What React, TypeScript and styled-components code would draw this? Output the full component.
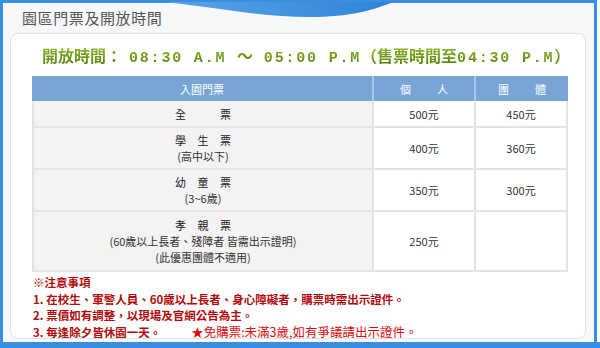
import React from "react";
import styled, { createGlobalStyle } from "styled-components";

const GlobalStyle = createGlobalStyle`
  html, body {
    margin: 0;
    padding: 0;
    background: #ffffff;
  }
  body {
    font-family: "Noto Sans CJK TC", "Liberation Sans", sans-serif;
  }
`;

const Outer = styled.div`
  position: relative;
  width: 600px;
  height: 348px;
  box-sizing: border-box;
  border-bottom: 6px solid #3a8ee0;
  overflow: hidden;
`;

const Frame = styled.div`
  width: 597px;
  height: 100%;
  box-sizing: border-box;
  border-left: 3px solid #3a8ee0;
  border-top: 3px solid #3a8ee0;
  border-right: 3px solid #3a8ee0;
  background: #f7f8f9;
  display: flex;
  flex-direction: column;
  padding: 0 8px 3px 7px;
`;

const Swoosh = styled.svg`
  position: absolute;
  left: 0;
  top: 0;
`;

const Title = styled.h2`
  flex-shrink: 0;
  margin: 0;
  height: 30px;
  display: flex;
  align-items: center;
  padding-left: 12px;
  font-size: 15px;
  line-height: 20px;
  font-weight: 400;
  letter-spacing: 0.6px;
  color: #555;
`;

const Panel = styled.div`
  flex: 1;
  min-height: 0;
  background: #fff;
  border: 1px solid #e2e2e2;
  border-radius: 8px;
  padding: 11px 16px 0 21px;
  display: flex;
  flex-direction: column;
`;

const Hours = styled.div`
  flex-shrink: 0;
  height: 20px;
  line-height: 20px;
  padding-left: 10px;
  margin-bottom: 11px;
  font-size: 16px;
  font-weight: 700;
  white-space: nowrap;
  background: linear-gradient(#94c232, #557f0a);
  -webkit-background-clip: text;
  background-clip: text;
  color: transparent;
`;

const Mono = styled.span<{ $lead?: boolean }>`
  font-family: "Liberation Mono", monospace;
  font-size: 15px;
  letter-spacing: 1.8px;
  margin-left: ${(p) => (p.$lead ? "7px" : "0")};
`;

const Head = styled.div`
  display: grid;
  grid-template-columns: 340px 100px 92px;
  column-gap: 2px;
  width: 536px;
  background: #a9c9ec;
`;

const HeadCell = styled.div<{ $spread?: boolean }>`
  height: 25px;
  display: flex;
  align-items: center;
  justify-content: center;
  background: #78a5d6;
  color: #fff;
  font-size: 11px;
  white-space: nowrap;
  letter-spacing: ${(p) => (p.$spread ? "26px" : "0")};
  padding-left: ${(p) => (p.$spread ? "26px" : "0")};
`;

const Body = styled.div`
  display: grid;
  grid-template-columns: 338px 100px 90px;
  gap: 2px;
  width: 536px;
  box-sizing: border-box;
  border: 2px solid #e4e4e4;
  border-top: none;
  background: #e4e4e4;
  font-size: 11px;
  line-height: 16px;
  color: #333;
`;

const Cell = styled.div<{ $name?: boolean; $h: number }>`
  height: ${(p) => p.$h}px;
  display: flex;
  flex-direction: column;
  align-items: center;
  justify-content: center;
  background: ${(p) => (p.$name ? "#f3f3f3" : "#ffffff")};
`;

const Name = styled.div`
  letter-spacing: 11.5px;
  padding-left: 11.5px;
  color: #222;
`;

const Notes = styled.div`
  padding-top: 2px;
  padding-left: 1px;
  font-size: 11.5px;
  font-weight: 700;
  line-height: 16.5px;
  color: #b10d0d;
  white-space: nowrap;
`;

const NoteRow = styled.div`
  display: flex;
  align-items: baseline;
`;

const Free = styled.span`
  margin-left: 30px;
  font-size: 12.5px;
  font-weight: 400;
  color: #e00d0d;
`;

type Row = { name: string; sub: string[]; single: string; group: string; h: number };

const rows: Row[] = [
  { name: "全　票", sub: [], single: "500元", group: "450元", h: 25 },
  { name: "學生票", sub: ["(高中以下)"], single: "400元", group: "360元", h: 40 },
  { name: "幼童票", sub: ["(3~6歲)"], single: "350元", group: "300元", h: 40 },
  {
    name: "孝親票",
    sub: ["(60歲以上長者、殘障者 皆需出示證明)", "(此優惠團體不適用)"],
    single: "250元",
    group: "",
    h: 58,
  },
];

const App: React.FC = () => {
  return (
    <Outer>
      <GlobalStyle />
      <Frame>
        <Title>園區門票及開放時間</Title>
        <Panel>
          <Hours>
            開放時間：<Mono $lead>08:30 A.M </Mono>～<Mono> 05:00 P.M</Mono>（售票時間至
            <Mono>04:30 P.M</Mono>）
          </Hours>
          <Head>
            <HeadCell>入園門票</HeadCell>
            <HeadCell $spread>個人</HeadCell>
            <HeadCell $spread>團體</HeadCell>
          </Head>
          <Body>
            {rows.map((r) => (
              <React.Fragment key={r.name}>
                <Cell $name $h={r.h}>
                  <Name>{r.name}</Name>
                  {r.sub.map((s) => (
                    <div key={s}>{s}</div>
                  ))}
                </Cell>
                <Cell $h={r.h}>{r.single}</Cell>
                <Cell $h={r.h}>{r.group}</Cell>
              </React.Fragment>
            ))}
          </Body>
          <Notes>
            <div>※注意事項</div>
            <div>1. 在校生、軍警人員、60歲以上長者、身心障礙者，購票時需出示證件。</div>
            <div>2. 票價如有調整，以現場及官網公告為主。</div>
            <NoteRow>
              3. 每逢除夕皆休園一天。
              <Free>★免購票:未滿3歲,如有爭議請出示證件。</Free>
            </NoteRow>
          </Notes>
        </Panel>
      </Frame>
      <Swoosh width="600" height="20" viewBox="0 0 600 20">
        <defs>
          <linearGradient id="sw" x1="0" y1="0" x2="1" y2="0">
            <stop offset="0" stopColor="#5aa6ec" />
            <stop offset="1" stopColor="#2f82d6" />
          </linearGradient>
        </defs>
        <path d="M165 2 C 220 8 262 17 310 17 C 350 17 374 10 393 2 Z" fill="url(#sw)" />
      </Swoosh>
    </Outer>
  );
};

export default App;
